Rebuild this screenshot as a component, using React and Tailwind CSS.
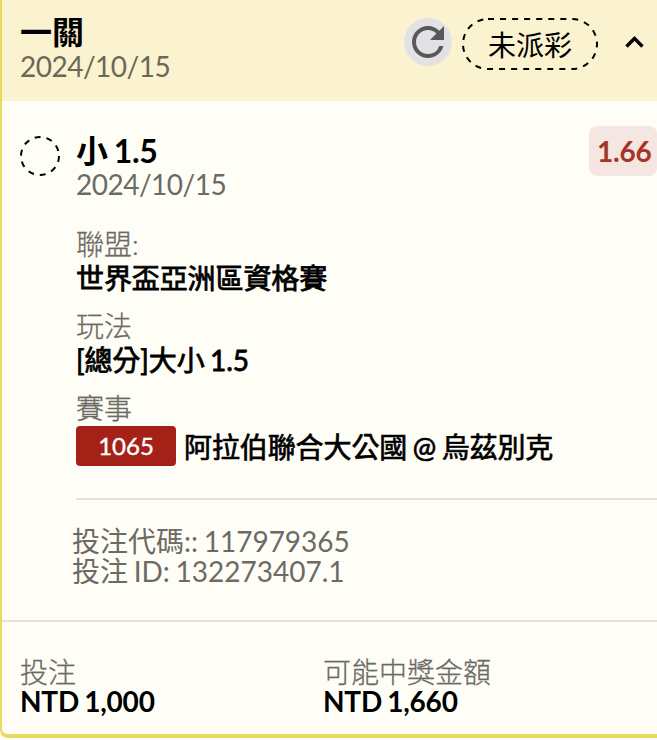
import React from 'react'
import { MdRefresh } from 'react-icons/md'

const details = [
  { label: '聯盟:', value: '世界盃亞洲區資格賽' },
  { label: '玩法', value: '[總分]大小 1.5' },
]

const totals = [
  { label: '投注', value: 'NTD 1,000' },
  { label: '可能中獎金額', value: 'NTD 1,660' },
]

export default function BetSlipCard() {
  return (
    <div className="h-[740px] w-[657px] overflow-hidden bg-white font-['Lato','Noto_Sans_CJK_TC',sans-serif] text-[28px] leading-[34px] [word-spacing:-1.5px] text-black">
      <div className="flex h-[738px] flex-col rounded-bl-lg border-b-4 border-l-2 border-[#ead95e] bg-[#fffef6]">
        <header className="flex h-[101px] shrink-0 bg-[#fbf2cf] pl-[18px]">
          <div className="flex-1 pt-[15px]">
            <h1 className="text-[32px] leading-[34px] font-bold">一關</h1>
            <p className="leading-[34px] tracking-[-0.5px] text-[#6c6857]">2024/10/15</p>
          </div>
          <button className="mt-[18px] flex size-12 items-center justify-center rounded-full bg-[#e2e2e5] text-[#58585a]">
            <MdRefresh className="size-12" />
          </button>
          <div className="relative mt-[18px] ml-[10px] flex h-[52px] w-[136px] items-center justify-center pt-0.5">
            <svg className="absolute inset-0" width="136" height="52" fill="none">
              <rect x="1" y="1" width="134" height="50" rx="25" stroke="black" strokeWidth="2" strokeDasharray="6 6.05" />
            </svg>
            未派彩
          </div>
          <button className="mt-[34px] mr-[13px] ml-[27px] h-4 w-[19px]">
            <svg viewBox="0 0 19 16" fill="none" stroke="currentColor" strokeWidth="3.4">
              <path d="M1.5 12.5 9.5 4.5l8 8" />
            </svg>
          </button>
        </header>

        <section className="flex h-[519px] shrink-0 pl-[18px]">
          <svg className="mt-[35px] size-10 shrink-0" viewBox="0 0 40 40" fill="none">
            <circle cx="20" cy="20" r="19" stroke="black" strokeWidth="2" strokeDasharray="5.97 5.97" />
          </svg>
          <div className="ml-4 flex-1">
            <div className="flex h-[126px] justify-between">
              <div className="pt-[33px]">
                <h2 className="text-[32px] leading-[34px] font-bold tracking-[-0.3px]">小 1.5</h2>
                <p className="leading-8 tracking-[-0.5px] text-[#6b6a65]">2024/10/15</p>
              </div>
              <span className="mt-[25px] h-[50px] w-[68px] rounded-lg bg-[#f5e6e1] pl-2 leading-[50px] font-bold tracking-[-0.2px] text-[#a5352b]">
                1.66
              </span>
            </div>
            {details.map((item) => (
              <div key={item.label} className="mb-[14px]">
                <p className="font-light text-[#6b6a65] [-webkit-text-stroke:0.3px_#6b6a65]">{item.label}</p>
                <p className="tracking-[-0.1px] [-webkit-text-stroke:0.8px_black]">{item.value}</p>
              </div>
            ))}
            <p className="font-light text-[#6b6a65] [-webkit-text-stroke:0.3px_#6b6a65]">賽事</p>
            <div className="mt-px flex items-center gap-2">
              <span className="h-10 w-[100px] rounded bg-[#a42118] text-center text-2xl leading-10 text-white [-webkit-text-stroke:0.4px_white]">
                1065
              </span>
              <span className="pt-0.5 tracking-[-0.1px] [-webkit-text-stroke:0.7px_black]">
                阿拉伯聯合大公國 @ 烏茲別克
              </span>
            </div>
            <hr className="mt-8 border-t-2 border-[#e3e3dc]" />
            <div className="mt-[26px] -ml-1 leading-[30px] text-[#6b6a65]">
              <p>投注代碼:: 117979365</p>
              <p>投注 ID: 132273407.1</p>
            </div>
          </div>
        </section>

        <footer className="grid flex-1 grid-cols-[303px_1fr] border-t-2 border-[#e3e3dc] pt-[35px] pl-[18px]">
          {totals.map((item) => (
            <div key={item.label}>
              <p className="leading-[30px] font-light text-[#6b6a65] [-webkit-text-stroke:0.3px_#6b6a65]">{item.label}</p>
              <p className="leading-[29px] font-bold tracking-[-0.2px]">{item.value}</p>
            </div>
          ))}
        </footer>
      </div>
    </div>
  )
}
